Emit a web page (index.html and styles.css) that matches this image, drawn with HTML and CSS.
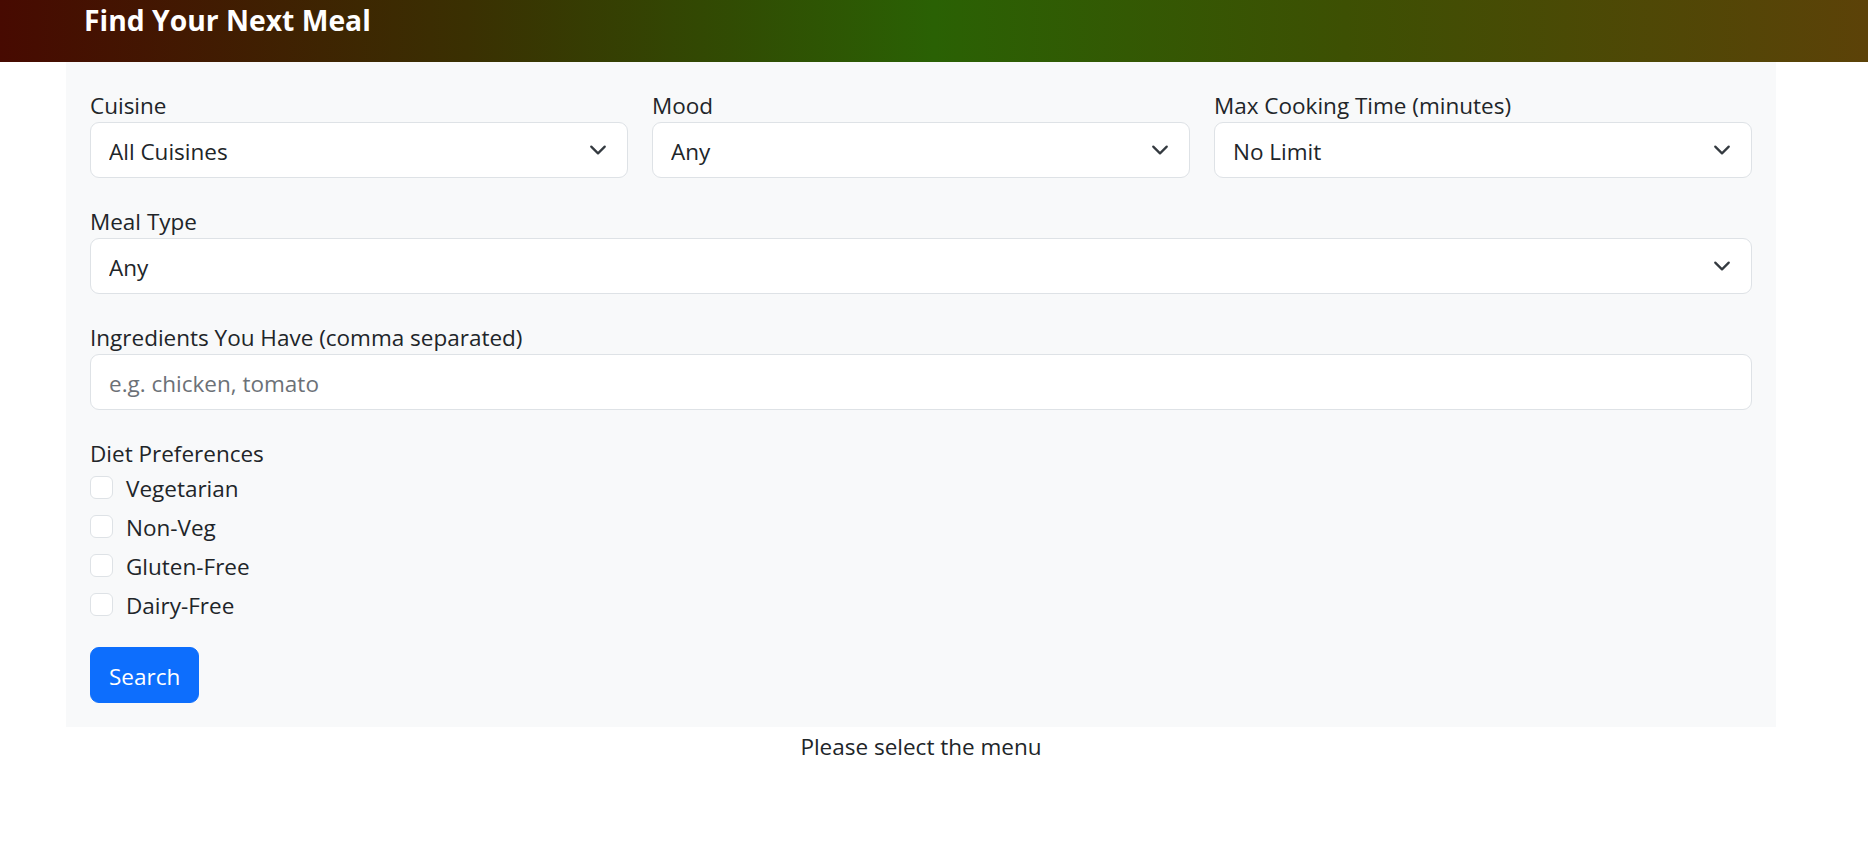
FILE: index.html
```html
<!DOCTYPE html>
<html lang="en">
<head>
<meta charset="utf-8">
<title>Find Your Next Meal</title>
<link rel="stylesheet" href="styles.css">
</head>
<body>
<header class="topbar">
  <h5 class="title">Find Your Next Meal</h5>
</header>
<main class="wrap">
  <form class="card">
    <div class="grid3">
      <div class="field">
        <label class="lbl" for="cuisine">Cuisine</label>
        <div class="select-wrap">
          <select id="cuisine" class="ctl"><option>All Cuisines</option></select>
          <svg class="chev" viewBox="0 0 16 16"><path d="m2 5 6 6 6-6" fill="none" stroke="#343a40" stroke-width="2" stroke-linecap="round" stroke-linejoin="round"/></svg>
        </div>
      </div>
      <div class="field">
        <label class="lbl" for="mood">Mood</label>
        <div class="select-wrap">
          <select id="mood" class="ctl"><option>Any</option></select>
          <svg class="chev" viewBox="0 0 16 16"><path d="m2 5 6 6 6-6" fill="none" stroke="#343a40" stroke-width="2" stroke-linecap="round" stroke-linejoin="round"/></svg>
        </div>
      </div>
      <div class="field">
        <label class="lbl" for="time">Max Cooking Time (minutes)</label>
        <div class="select-wrap">
          <select id="time" class="ctl"><option>No Limit</option></select>
          <svg class="chev" viewBox="0 0 16 16"><path d="m2 5 6 6 6-6" fill="none" stroke="#343a40" stroke-width="2" stroke-linecap="round" stroke-linejoin="round"/></svg>
        </div>
      </div>
    </div>
    <div class="field">
      <label class="lbl" for="meal">Meal Type</label>
      <div class="select-wrap">
        <select id="meal" class="ctl"><option>Any</option></select>
        <svg class="chev" viewBox="0 0 16 16"><path d="m2 5 6 6 6-6" fill="none" stroke="#343a40" stroke-width="2" stroke-linecap="round" stroke-linejoin="round"/></svg>
      </div>
    </div>
    <div class="field">
      <label class="lbl" for="ing">Ingredients You Have (comma separated)</label>
      <input id="ing" class="ctl" type="text" placeholder="e.g. chicken, tomato">
    </div>
    <div class="field">
      <span class="lbl">Diet Preferences</span>
      <div class="checks">
        <label class="check"><input type="checkbox" class="box"><span class="check-text">Vegetarian</span></label>
        <label class="check"><input type="checkbox" class="box"><span class="check-text">Non-Veg</span></label>
        <label class="check"><input type="checkbox" class="box"><span class="check-text">Gluten-Free</span></label>
        <label class="check"><input type="checkbox" class="box"><span class="check-text">Dairy-Free</span></label>
      </div>
    </div>
    <div class="actions">
      <button type="button" class="btn">Search</button>
    </div>
  </form>
  <p class="status">Please select the menu</p>
</main>
</body>
</html>
```

FILE: styles.css
```css
* { box-sizing: border-box; }

body {
  margin: 0;
  font-family: "Open Sans", "Noto Sans", sans-serif;
  font-size: 22.5px;
  line-height: 36px;
  color: #212529;
  background: #fff;
}

.topbar {
  height: 62px;
  padding: 2px 0 0 84px;
  background: linear-gradient(to right, #470a01 0%, #3a3002 25%, #2a6104 50%, #3d5003 72%, #5c4208 100%);
}

.title {
  margin: 0;
  color: #fff;
  font-size: 28.3px;
  font-weight: 700;
  line-height: 36px;
}

.wrap {
  width: 1710px;
  margin-left: 66px;
}

.card {
  background: #f8f9fa;
  padding: 24px;
  display: flex;
  flex-direction: column;
  gap: 24px;
}

.grid3 {
  display: grid;
  grid-template-columns: repeat(3, 1fr);
  gap: 24px;
}

.field {
  display: flex;
  flex-direction: column;
}

.lbl {
  display: block;
  line-height: 33px;
  padding-top: 3px;
}

.select-wrap {
  position: relative;
}

.ctl {
  display: block;
  width: 100%;
  height: 56px;
  margin: 0;
  padding: 3px 60px 0 18px;
  font: inherit;
  color: #212529;
  background: #fff;
  border: 1px solid #dee2e6;
  border-radius: 9px;
  appearance: none;
  -webkit-appearance: none;
  outline: none;
}

.ctl::placeholder {
  color: #6c7177;
  opacity: 1;
}

.chev {
  position: absolute;
  right: 21px;
  top: 19px;
  width: 18px;
  height: 18px;
  pointer-events: none;
}

.checks {
  display: flex;
  flex-direction: column;
  gap: 3px;
}

.check {
  display: flex;
  align-items: flex-start;
  min-height: 36px;
}

.check-text {
  line-height: 34px;
  padding-top: 2px;
}

.box {
  appearance: none;
  -webkit-appearance: none;
  width: 23px;
  height: 23px;
  margin: 6px 13px 0 0;
  flex: none;
  background: #fff;
  border: 1px solid #dee2e6;
  border-radius: 6px;
}

.btn {
  height: 56px;
  padding: 3px 18px 0;
  font: inherit;
  color: #fff;
  background: #0d6efd;
  border: 1px solid #0d6efd;
  border-radius: 9px;
}

.status {
  margin: 0;
  text-align: center;
  line-height: 33px;
  padding-top: 3px;
}
```
